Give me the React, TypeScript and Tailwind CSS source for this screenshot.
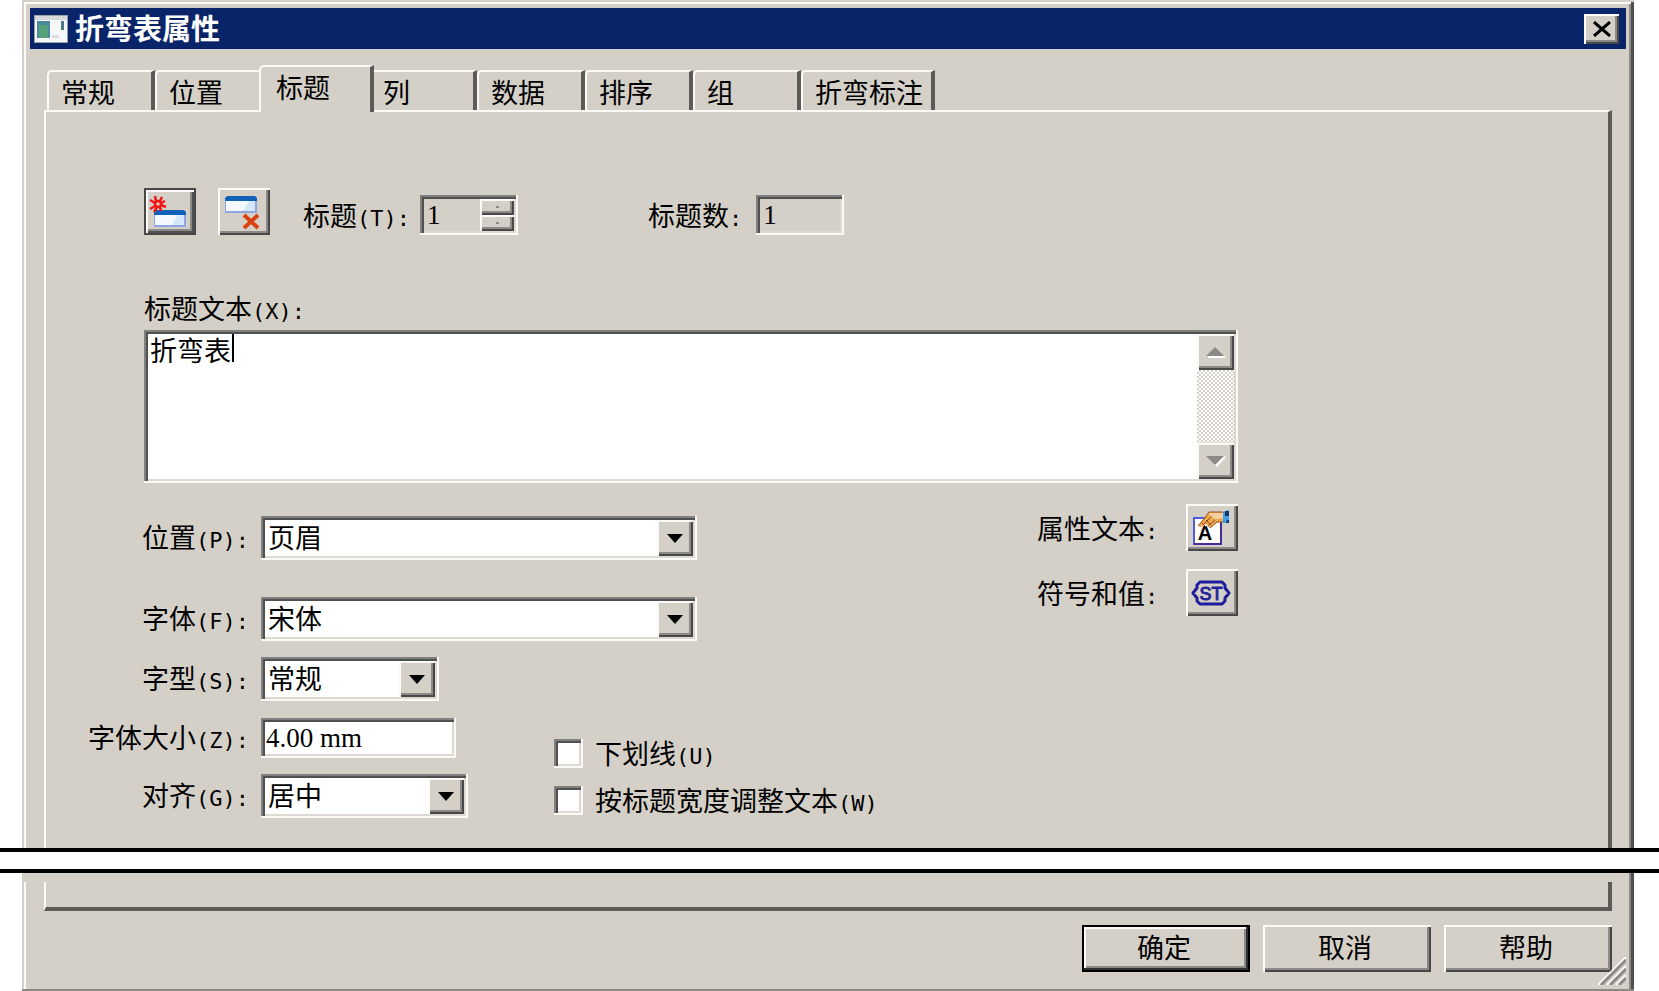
import { useState } from "react";
import type { ReactNode } from "react";
import clsx from "clsx";

const TABS = ["常规", "位置", "标题", "列", "数据", "排序", "组", "折弯标注"];

const raised =
	"bg-[#d4d0c8] shadow-[inset_2px_2px_#fbfaf7,inset_-2px_-2px_#484848,inset_-4px_-4px_#8c8a86]";
const sunken =
	"shadow-[inset_-2px_-2px_#fbfaf7,inset_2px_2px_#808080,inset_4px_4px_#505050,inset_-4px_-4px_#dedad3]";

// Latin part of a label is set in half-width characters
function LabelText({ text, hotkey, colon = true }: { text: string; hotkey?: string; colon?: boolean }) {
	return (
		<>
			{text}
			<span className="font-['DejaVu_Sans_Mono',monospace] text-[22px] leading-none">
				{hotkey ? `(${hotkey})` : ""}
				{colon ? ":" : ""}
			</span>
		</>
	);
}

function Row({ id, text, hotkey, children }: { id: string; text: string; hotkey: string; children: ReactNode }) {
	return (
		<div className="flex items-center gap-3">
			<label htmlFor={id} className="w-[203px] shrink-0 pb-[2px] text-right">
				<LabelText text={text} hotkey={hotkey} />
			</label>
			{children}
		</div>
	);
}

function Combo({ id, options, className }: { id: string; options: string[]; className: string }) {
	return (
		<div className={clsx("relative h-11", className)}>
			<select
				id={id}
				className={clsx("h-full w-full appearance-none bg-white pr-10 pb-[2px] pl-[7px] outline-none", sunken)}
			>
				{options.map((o) => (
					<option key={o}>{o}</option>
				))}
			</select>
			<span
				className={clsx(
					"pointer-events-none absolute top-1 right-1 bottom-1 flex w-9 items-center justify-center",
					raised,
				)}
			>
				<svg width="16" height="9" viewBox="0 0 18 10">
					<path d="M0 0H18L9 10Z" fill="#000" />
				</svg>
			</span>
		</div>
	);
}

function ToolButton({ label, active, children }: { label: string; active?: boolean; children: ReactNode }) {
	return (
		<button
			type="button"
			aria-label={label}
			className={clsx(
				"h-[47px] w-[52px] shrink-0",
				active
					? "bg-[#d4d0c8] shadow-[inset_0_0_0_2px_#484848,inset_4px_4px_#fbfaf7,inset_-4px_-4px_#505050,inset_-6px_-6px_#8c8a86]"
					: raised,
			)}
		>
			{children}
		</button>
	);
}

function Check({ id, text, hotkey }: { id: string; text: string; hotkey: string }) {
	return (
		<div className="flex h-[29px] items-center gap-3">
			<input
				id={id}
				type="checkbox"
				className={clsx("h-[29px] w-[29px] shrink-0 appearance-none bg-white", sunken)}
			/>
			<label htmlFor={id} className="pb-[2px] whitespace-nowrap">
				<LabelText text={text} hotkey={hotkey} colon={false} />
			</label>
		</div>
	);
}

function WindowIcon() {
	return (
		<svg width="34" height="28" viewBox="0 0 34 28">
			<rect width="34" height="28" fill="#9aa0a8" />
			<rect x="1" y="1" width="32" height="26" fill="#f6f7f8" />
			<rect x="1" y="1" width="32" height="4" fill="#d6d9dc" />
			<rect x="3" y="6" width="13" height="17" fill="#4a8a9c" />
			<path d="M5 23V10H14V23Z" fill="#58a07c" />
			<rect x="18" y="20" width="7" height="3" fill="#dcdcdc" />
			<rect x="27" y="6" width="3" height="9" fill="#4a7a80" />
		</svg>
	);
}

// Small blue-capped bar shared by the add and delete icons
function HeaderBar({ x, y }: { x: number; y: number }) {
	return (
		<g transform={`translate(${x} ${y})`}>
			<rect x="0" y="2" width="32" height="15" fill="#8fa4e0" />
			<path d="M2 0H30L32 2V5H0V2Z" fill="#0f62b8" />
			<rect x="1" y="5" width="29" height="10" fill="#f4f9ff" />
			<path d="M18 15L24 5H30V15Z" fill="#d5e8fb" />
		</g>
	);
}

function AddIcon() {
	return (
		<svg width="52" height="47" viewBox="0 0 52 47">
			<HeaderBar x={10} y={22} />
			<g stroke="#f01414" strokeWidth="2.5" fill="none">
				<circle cx="14" cy="16" r="3" />
				<path d="M12 13L11 8M16 13L18 9M11 15L6 12M17 15L21 13M11 18L6 21M17 17L22 19M13 19L10 24M16 19L17 23" />
			</g>
		</svg>
	);
}

function DeleteIcon() {
	return (
		<svg width="52" height="47" viewBox="0 0 52 47">
			<HeaderBar x={7} y={8} />
			<path d="M26 27L40 40M40 27L26 40" stroke="#d8420f" strokeWidth="4" fill="none" />
		</svg>
	);
}

function PropertyIcon() {
	return (
		<svg width="52" height="47" viewBox="0 0 52 47">
			<rect x="8" y="14" width="27" height="26" fill="#fff" stroke="#4b5ce0" strokeWidth="2" />
			<path d="M35 18V40H8" fill="none" stroke="#4a2a9c" strokeWidth="2" />
			<text
				x="19"
				y="36"
				textAnchor="middle"
				fontSize="20"
				fontWeight="bold"
				fontFamily="Liberation Sans, sans-serif"
				fill="#000"
			>
				A
			</text>
			<path d="M12 22L18 14L23 8H38V18H31L24 24L20 20L15 23Z" fill="#e9a94e" />
			<path d="M22 9H37V14L29 15Z" fill="#f8cfa4" />
			<path
				d="M12 22L18 15L23 8H37M16 19L20 23M20 16L25 21M24 24L31 18H38M18 20L25 13M22 22L29 16"
				stroke="#9a4a1c"
				strokeWidth="1"
				fill="none"
			/>
			<path d="M37 8L43 6V19H37Z" fill="#3aa0ea" />
			<path d="M39 7H43V12H39ZM41 16H43V19H40Z" fill="#14366c" />
		</svg>
	);
}

function SymbolIcon() {
	return (
		<svg width="52" height="47" viewBox="0 0 52 47">
			<path
				d="M14 13H36L39 16V19L43 24L39 29V32L36 35H14L11 32V29L7 24L11 19V16Z"
				fill="none"
				stroke="#1c1c9c"
				strokeWidth="3"
				strokeLinejoin="round"
			/>
			<text
				x="25"
				y="31"
				textAnchor="middle"
				fontSize="18"
				fontFamily="Liberation Sans, sans-serif"
				stroke="#24249a"
				strokeWidth="1"
				fill="#24249a"
			>
				ST
			</text>
		</svg>
	);
}

export default function App() {
	const [tab, setTab] = useState("标题");

	return (
		<div className="flex min-h-screen flex-col overflow-hidden bg-white font-['Noto_Sans_CJK_SC',sans-serif] text-[27px] leading-10 text-black">
			{/* Upper part of the dialog */}
			<div className="mr-[25px] ml-[22px] bg-[#d4d0c8] px-2 pt-2 shadow-[inset_2px_2px_#d4d0c8,inset_-3px_0_#505050,inset_4px_4px_#fbfaf7,inset_-5px_0_#8c8a86]">
				<header className="flex h-[41px] items-center bg-[#0a246a] pr-[7px] pl-1">
					<WindowIcon />
					<h1 className="ml-[7px] grow pb-1 text-[29px] leading-9 font-bold text-white">折弯表属性</h1>
					<button
						type="button"
						aria-label="关闭"
						className={clsx("flex h-[30px] w-[35px] items-center justify-center", raised)}
					>
						<svg width="18" height="16" viewBox="0 0 18 16">
							<path d="M1 1L17 15M17 1L1 15" stroke="#000" strokeWidth="3" />
						</svg>
					</button>
				</header>

				<main className="mr-[14px] ml-[14px] pt-4">
					<div role="tablist" className="flex items-end pl-[3px]">
						{TABS.map((t) => (
							<button
								key={t}
								type="button"
								role="tab"
								aria-selected={t === tab}
								onClick={() => setTab(t)}
								className={clsx(
									"shrink-0 rounded-tl-[5px] border-t-2 border-r-4 border-l-2 border-t-[#fbfaf7] border-r-[#5c5a57] border-l-[#fbfaf7] bg-[#d4d0c8] text-left",
									t === tab
										? "relative z-10 -mr-[5px] -mb-[2px] -ml-[4px] h-[47px] w-[115px] pb-[6px] pl-[15px]"
										: "h-10 pb-1 pl-3",
									t !== tab && (t === "折弯标注" ? "w-[134px]" : "w-[108px]"),
								)}
							>
								{t}
							</button>
						))}
					</div>

					<div
						role="tabpanel"
						className="border-t-2 border-r-4 border-l-2 border-t-[#fbfaf7] border-r-[#5c5a57] border-l-[#fbfaf7] pt-[76px] pb-[30px]"
					>
						<div className="flex items-end pl-[98px]">
							<ToolButton label="新建标题" active>
								<AddIcon />
							</ToolButton>
							<div className="ml-[22px] flex">
								<ToolButton label="删除标题">
									<DeleteIcon />
								</ToolButton>
							</div>
							<label htmlFor="heading" className="ml-[33px]">
								<LabelText text="标题" hotkey="T" />
							</label>
							<div className={clsx("ml-[10px] flex h-10 w-[98px] p-1", sunken)}>
								<input
									id="heading"
									defaultValue="1"
									className="w-full min-w-0 bg-transparent pl-[3px] font-['Liberation_Serif',serif] outline-none"
								/>
								<div className="flex w-[34px] shrink-0 flex-col">
									{["增加", "减少"].map((n) => (
										<button
											key={n}
											type="button"
											aria-label={n}
											className={clsx("flex h-4 w-[34px] items-center justify-center", raised)}
										>
											<span className="h-[2px] w-[3px] bg-[#8c8a86]" />
										</button>
									))}
								</div>
							</div>
							<label htmlFor="count" className="ml-[130px]">
								<LabelText text="标题数" />
							</label>
							<input
								id="count"
								readOnly
								value="1"
								className={clsx(
									"ml-[14px] h-10 w-[88px] bg-[#d4d0c8] pl-[7px] font-['Liberation_Serif',serif] outline-none",
									sunken,
								)}
							/>
						</div>

						<div className="mt-[53px] pl-[98px]">
							<label htmlFor="text" className="block pb-[2px]">
								<LabelText text="标题文本" hotkey="X" />
							</label>
							<div className={clsx("relative flex h-[153px] w-[1094px] bg-white p-1", sunken)}>
								<textarea
									id="text"
									defaultValue="折弯表"
									className="h-full grow resize-none overflow-hidden bg-transparent pl-[2px] leading-8 outline-none"
								/>
								<span className="absolute top-1 left-[88px] h-7 w-[2px] bg-black" />
								<div className="flex w-[37px] shrink-0 flex-col justify-between bg-[repeating-conic-gradient(#d4d0c8_0_25%,#fff_0_50%)] bg-[length:4px_4px]">
									<button
										type="button"
										aria-label="向上滚动"
										className={clsx("flex h-9 w-[37px] items-center justify-center", raised)}
									>
										<svg width="20" height="12" viewBox="0 0 20 12">
											<path d="M2 12H19V10H2Z" fill="#fff" />
											<path d="M0 10L9 1L18 10Z" fill="#8c8a86" />
										</svg>
									</button>
									<button
										type="button"
										aria-label="向下滚动"
										className={clsx("flex h-9 w-[37px] items-center justify-center", raised)}
									>
										<svg width="20" height="12" viewBox="0 0 20 12">
											<path d="M20 2L11 12L8 9L17 1Z" fill="#fff" />
											<path d="M0 1H18L9 10Z" fill="#8c8a86" />
										</svg>
									</button>
								</div>
							</div>
						</div>

						<div className="mt-[21px] flex items-start">
							<div className="w-[991px] shrink-0 pt-3">
								<Row id="pos" text="位置" hotkey="P">
									<Combo id="pos" options={["页眉", "页脚"]} className="w-[436px]" />
								</Row>
								<div className="mt-[37px]">
									<Row id="font" text="字体" hotkey="F">
										<Combo id="font" options={["宋体", "黑体"]} className="w-[436px]" />
									</Row>
								</div>
								<div className="mt-4">
									<Row id="style" text="字型" hotkey="S">
										<Combo id="style" options={["常规", "粗体"]} className="w-[178px]" />
									</Row>
								</div>
								<div className="mt-4 flex items-start">
									<div className="flex w-[508px] flex-col gap-[15px]">
										<Row id="size" text="字体大小" hotkey="Z">
											<input
												id="size"
												defaultValue="4.00 mm"
												className={clsx(
													"h-10 w-[195px] bg-white pl-[5px] font-['Liberation_Serif',serif] outline-none",
													sunken,
												)}
											/>
										</Row>
										<Row id="align" text="对齐" hotkey="G">
											<Combo id="align" options={["居中", "左", "右"]} className="w-[207px]" />
										</Row>
									</div>
									<div className="flex flex-col gap-[18px] pt-[22px]">
										<Check id="underline" text="下划线" hotkey="U" />
										<Check id="fit" text="按标题宽度调整文本" hotkey="W" />
									</div>
								</div>
							</div>

							<div className="flex flex-col gap-[18px]">
								<div className="flex items-center gap-7">
									<span>
										<LabelText text="属性文本" />
									</span>
									<ToolButton label="属性文本">
										<PropertyIcon />
									</ToolButton>
								</div>
								<div className="flex items-center gap-7">
									<span>
										<LabelText text="符号和值" />
									</span>
									<ToolButton label="符号和值">
										<SymbolIcon />
									</ToolButton>
								</div>
							</div>
						</div>
					</div>
				</main>
			</div>

			{/* Break across the dialog */}
			<div className="h-[25px] shrink-0 border-y-4 border-black bg-white" />

			{/* Lower part of the dialog */}
			<div className="mr-[25px] ml-[22px] flex grow flex-col bg-[#d4d0c8] shadow-[inset_-3px_0_#505050,inset_-5px_0_#8c8a86]">
				<div className="relative mt-[9px] grow border-b-2 border-b-[#8c8a86] px-[22px] shadow-[inset_2px_0_#d4d0c8,inset_4px_0_#fbfaf7]">
					<div className="h-[29px] border-r-4 border-b-4 border-l-2 border-r-[#5c5a57] border-b-[#5c5a57] border-l-[#fbfaf7]" />
					<footer className="mt-[14px] flex justify-end gap-[13px]">
						<button
							type="button"
							className="h-[47px] w-[168px] bg-[#d4d0c8] pr-1 pb-[3px] shadow-[inset_0_0_0_2px_#000,inset_-4px_-4px_#303030,inset_4px_4px_#fbfaf7,inset_-6px_-6px_#8c8a86]"
						>
							确定
						</button>
						<button type="button" className={clsx("h-[47px] w-[168px] pr-1 pb-[3px]", raised)}>
							取消
						</button>
						<button type="button" className={clsx("h-[47px] w-[168px] pr-1 pb-[3px]", raised)}>
							帮助
						</button>
					</footer>
					<svg className="absolute right-2 bottom-1" width="28" height="28" viewBox="0 0 28 28">
						<path d="M0 28L28 0M9 28L28 9M18 28L28 18" stroke="#fbfaf7" strokeWidth="2" />
						<path d="M3 28L28 3M12 28L28 12M21 28L28 21" stroke="#8c8a86" strokeWidth="3" />
					</svg>
				</div>
			</div>
		</div>
	);
}
